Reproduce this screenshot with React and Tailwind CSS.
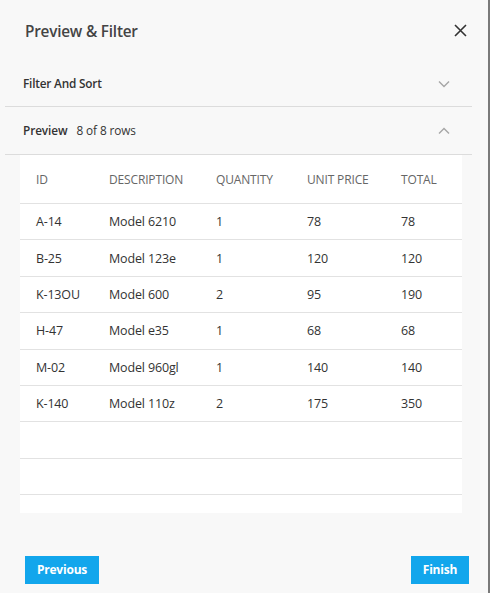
import React from "react";

const rows = [
  ["A-14", "Model 6210", "1", "78", "78"],
  ["B-25", "Model 123e", "1", "120", "120"],
  ["K-13OU", "Model 600", "2", "95", "190"],
  ["H-47", "Model e35", "1", "68", "68"],
  ["M-02", "Model 960gl", "1", "140", "140"],
  ["K-140", "Model 110z", "2", "175", "350"],
  ["", "", "", "", ""],
  ["", "", "", "", ""],
];

const cols = ["w-[73px]", "w-[107px]", "w-[91px]", "w-[94px]", "flex-1"];

function Chevron({ up }) {
  return (
    <svg width="12" height="8" viewBox="0 0 12 8" fill="none">
      <path
        d={up ? "M1 6.5 L6 1.5 L11 6.5" : "M1 1.5 L6 6.5 L11 1.5"}
        stroke="#a6a6a6"
        strokeWidth="1.4"
      />
    </svg>
  );
}

export default function App() {
  return (
    <div
      className="w-[490px] h-[593px] bg-[#f8f8f8] border-r-2 border-[#7a7a7a] flex flex-col text-[#333]"
      style={{ fontFamily: '"Open Sans", "Noto Sans", sans-serif' }}
    >
      <div className="flex items-center justify-between pl-[25px] pr-[21px] pt-[21px] h-[42px]">
        <span className="text-[15.3px] font-semibold text-[#444] tracking-[-0.2px]">Preview &amp; Filter</span>
        <svg width="13" height="13" viewBox="0 0 13 13" className="mt-[-3px]">
          <path d="M1 1 L12 12 M12 1 L1 12" stroke="#333" strokeWidth="1.6" />
        </svg>
      </div>
      <div className="mx-[5px] w-[467px]">
        <div className="flex items-center justify-between h-[45px] mt-[20px] pl-[18px] pr-[22px] border-b border-[#dcdcdc]">
          <span className="text-[11.8px] font-semibold tracking-[-0.2px]">Filter And Sort</span>
          <Chevron />
        </div>
        <div className="flex items-center justify-between h-[48px] pl-[18px] pr-[22px] border-b border-[#dcdcdc]">
          <span className="text-[11.8px] tracking-[-0.1px]">
            <span className="font-semibold">Preview</span>
            <span className="ml-[9px]">8 of 8 rows</span>
          </span>
          <Chevron up />
        </div>
      </div>
      <div className="mx-[20px] w-[442px] bg-white h-[358px] overflow-hidden">
        <div className="flex items-center h-[49px] border-b border-[#e2e2e2] px-[16px] text-[12px] text-[#666] tracking-[-0.15px] pt-[2px]">
          {["ID", "DESCRIPTION", "QUANTITY", "UNIT PRICE", "TOTAL"].map((h, i) => (
            <div key={i} className={cols[i]}>{h}</div>
          ))}
        </div>
        {rows.map((r, ri) => (
          <div
            key={ri}
            className="flex items-center h-[36.4px] border-b border-[#e2e2e2] px-[16px] pt-[2px] text-[12.5px] text-[#333] tracking-[-0.15px]"
          >
            {r.map((c, i) => (
              <div key={i} className={cols[i]}>{c}</div>
            ))}
          </div>
        ))}
      </div>
      <div className="flex justify-between pl-[25px] pr-[19px] mt-[43px]">
        <button className="w-[74px] h-[28px] bg-[#12a6ec] text-white text-[12px] font-bold tracking-[-0.2px]">Previous</button>
        <button className="w-[58px] h-[28px] bg-[#12a6ec] text-white text-[12px] font-bold tracking-[-0.2px]">Finish</button>
      </div>
    </div>
  );
}
